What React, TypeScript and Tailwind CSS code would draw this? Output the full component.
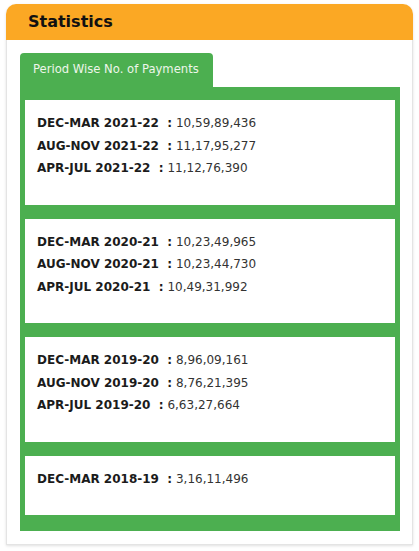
const stats = [
  [
    ["DEC-MAR 2021-22", "10,59,89,436"],
    ["AUG-NOV 2021-22", "11,17,95,277"],
    ["APR-JUL 2021-22", "11,12,76,390"],
  ],
  [
    ["DEC-MAR 2020-21", "10,23,49,965"],
    ["AUG-NOV 2020-21", "10,23,44,730"],
    ["APR-JUL 2020-21", "10,49,31,992"],
  ],
  [
    ["DEC-MAR 2019-20", "8,96,09,161"],
    ["AUG-NOV 2019-20", "8,76,21,395"],
    ["APR-JUL 2019-20", "6,63,27,664"],
  ],
  [["DEC-MAR 2018-19", "3,16,11,496"]],
]

export default function App() {
  return (
    <div className="min-h-screen bg-white pt-[4px] px-[6px] font-['DejaVu_Sans',Verdana,sans-serif]">
      <div className="w-[407px] rounded-t-[10px] shadow-[0_1px_3px_rgba(0,0,0,0.12)]">
        <div className="h-[36px] bg-[#fba824] rounded-t-[10px] flex items-center pl-[22px]">
          <h2 className="text-[16px] font-bold text-[#111]">Statistics</h2>
        </div>
        <div className="border-x border-b border-[#e4e4e4] bg-white pl-[13px] pr-[12px] pt-[13px] pb-[13px]">
          <div className="w-[193px] h-[34px] bg-[#4caf50] rounded-t-[4px] flex items-center pl-[13px] text-[11.6px] text-[#eef6ea]">
            Period Wise No. of Payments
          </div>
          <div className="bg-[#4caf50] px-[5px] pt-[13px] pb-[16px] flex flex-col gap-[14px]">
            {stats.map((group, i) => (
              <div key={i} className="bg-white pl-[12px] pt-[12px] pb-[25px]">
                {group.map(([label, value]) => (
                  <div key={label} className="text-[12px] leading-[22.5px] whitespace-pre">
                    <span className="font-bold text-[#1b1b1b]">{label}{"\u00a0\u00a0:"}</span>
                    <span className="text-[#333]"> {value}</span>
                  </div>
                ))}
              </div>
            ))}
          </div>
        </div>
      </div>
    </div>
  )
}
